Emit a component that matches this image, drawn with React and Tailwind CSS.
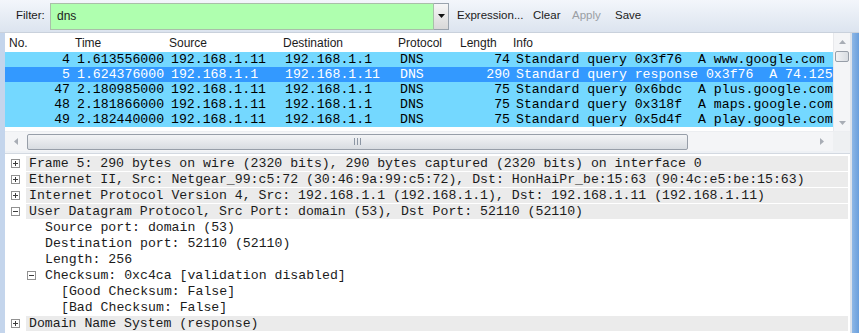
import React from 'react';

const packets = [
  { no: 4, time: '1.613556000', src: '192.168.1.11', dst: '192.168.1.1', proto: 'DNS', len: 74, info: 'Standard query 0x3f76  A www.google.com' },
  { no: 5, time: '1.624376000', src: '192.168.1.1', dst: '192.168.1.11', proto: 'DNS', len: 290, info: 'Standard query response 0x3f76  A 74.125.225.80', selected: true },
  { no: 47, time: '2.180985000', src: '192.168.1.11', dst: '192.168.1.1', proto: 'DNS', len: 75, info: 'Standard query 0x6bdc  A plus.google.com' },
  { no: 48, time: '2.181866000', src: '192.168.1.11', dst: '192.168.1.1', proto: 'DNS', len: 75, info: 'Standard query 0x318f  A maps.google.com' },
  { no: 49, time: '2.182440000', src: '192.168.1.11', dst: '192.168.1.1', proto: 'DNS', len: 75, info: 'Standard query 0x5d4f  A play.google.com' },
];

const tree = [
  { level: 0, box: '+', text: 'Frame 5: 290 bytes on wire (2320 bits), 290 bytes captured (2320 bits) on interface 0' },
  { level: 0, box: '+', text: 'Ethernet II, Src: Netgear_99:c5:72 (30:46:9a:99:c5:72), Dst: HonHaiPr_be:15:63 (90:4c:e5:be:15:63)' },
  { level: 0, box: '+', text: 'Internet Protocol Version 4, Src: 192.168.1.1 (192.168.1.1), Dst: 192.168.1.11 (192.168.1.11)' },
  { level: 0, box: '-', text: 'User Datagram Protocol, Src Port: domain (53), Dst Port: 52110 (52110)' },
  { level: 1, text: 'Source port: domain (53)' },
  { level: 1, text: 'Destination port: 52110 (52110)' },
  { level: 1, text: 'Length: 256' },
  { level: 1, box: '-', text: 'Checksum: 0xc4ca [validation disabled]' },
  { level: 2, text: '[Good Checksum: False]' },
  { level: 2, text: '[Bad Checksum: False]' },
  { level: 0, box: '+', text: 'Domain Name System (response)' },
];

const mono = { fontFamily: '"Liberation Mono", monospace' };

const Expander = ({ open }) => (
  <svg width="9" height="9" className="shrink-0">
    <rect x="0.5" y="0.5" width="8" height="8" fill="#fff" stroke="#919191" />
    <line x1="2" y1="4.5" x2="7" y2="4.5" stroke="#3c3c3c" />
    {!open && <line x1="4.5" y1="2" x2="4.5" y2="7" stroke="#3c3c3c" />}
  </svg>
);

const Arrow = ({ dir }) => {
  const pts = {
    up: '0,4 3.5,0 7,4',
    down: '0,0 3.5,4 7,0',
    left: '4,0 0,3.5 4,7',
    right: '0,0 4,3.5 0,7',
  }[dir];
  const vertical = dir === 'up' || dir === 'down';
  return (
    <svg width={vertical ? 7 : 4} height={vertical ? 4 : 7}>
      <polygon points={pts} fill="#a8adb5" />
    </svg>
  );
};

const Grip = ({ vertical }) => (
  <svg width={vertical ? 7 : 7} height={vertical ? 7 : 7}>
    {[0, 3, 6].map((o) =>
      vertical ? (
        <line key={o} x1="0" y1={o + 0.5} x2="7" y2={o + 0.5} stroke="#8c96a3" />
      ) : (
        <line key={o} x1={o + 0.5} y1="0" x2={o + 0.5} y2="7" stroke="#8c96a3" />
      )
    )}
  </svg>
);

export default function App() {
  return (
    <div
      className="w-[859px] h-[333px] overflow-hidden bg-white flex flex-col text-[#1b1b1b]"
      style={{ fontFamily: '"Liberation Sans", Arial, sans-serif' }}
    >
      {/* filter toolbar */}
      <div className="h-[33px] shrink-0 flex items-center bg-gradient-to-b from-[#f3f6fb] to-[#dce4ef] border-b border-[#c9d1dc] text-[11.5px]">
        <span className="w-[34px] ml-[16px] shrink-0">Filter:</span>
        <div className="w-[384px] h-[27px] bg-[#afffaf] border border-[#a9bfa9] flex items-center pl-[6px] text-[12px]">
          dns
        </div>
        <div className="w-[15px] h-[27px] border border-l-0 border-[#9aa3ad] bg-gradient-to-b from-[#f6f6f6] to-[#d8d8d8] flex items-center justify-center">
          <svg width="7" height="4">
            <polygon points="0,0 3.5,4 7,0" fill="#111" />
          </svg>
        </div>
        <span className="ml-[8px] w-[76px] shrink-0">Expression...</span>
        <span className="w-[39px] shrink-0">Clear</span>
        <span className="w-[43px] shrink-0 text-[#9a9ea4]">Apply</span>
        <span>Save</span>
      </div>

      <div className="flex flex-1 min-h-0">
        {/* window frame left */}
        <div className="w-[5px] shrink-0 bg-[#c4d5ec]" />

        <div className="w-[845px] shrink-0 flex flex-col">
          {/* packet list */}
          <div className="flex h-[98px] shrink-0">
            <div className="w-[828px] shrink-0 overflow-hidden">
              <div className="flex h-[19px] items-center text-[12px] whitespace-nowrap">
                <div className="w-[68px] pl-[4px]">No.</div>
                <div className="w-[94px] pl-[2px]">Time</div>
                <div className="w-[114px] pl-[2px]">Source</div>
                <div className="w-[115px] pl-[2px]">Destination</div>
                <div className="w-[62px] pl-[2px]">Protocol</div>
                <div className="w-[54px] pl-[2px]">Length</div>
                <div className="w-[321px] pl-[1px]">Info</div>
              </div>
              {packets.map((p) => (
                <div
                  key={p.no}
                  className={`flex h-[15px] items-center text-[13.2px] leading-[15px] whitespace-pre ${
                    p.selected ? 'bg-[#3399ff] text-white' : 'bg-[#74d8ff] text-black'
                  }`}
                  style={mono}
                >
                  <div className="w-[68px] shrink-0 text-right pr-[3px]">{p.no}</div>
                  <div className="w-[94px] shrink-0 pl-[4px]">{p.time}</div>
                  <div className="w-[114px] shrink-0 pl-[4px]">{p.src}</div>
                  <div className="w-[115px] shrink-0 pl-[4px]">{p.dst}</div>
                  <div className="w-[62px] shrink-0 pl-[4px]">{p.proto}</div>
                  <div className="w-[54px] shrink-0 text-right pr-[2px]">{p.len}</div>
                  <div className="w-[321px] shrink-0 pl-[4px] overflow-hidden">{p.info}</div>
                </div>
              ))}
            </div>
            {/* vertical scrollbar */}
            <div className="w-[17px] shrink-0 bg-[#f4f5f7] border-l border-[#e8e9ec] flex flex-col items-center">
              <div className="h-[18px] flex items-center justify-center">
                <Arrow dir="up" />
              </div>
              <div className="w-[14px] h-[11px] rounded-[2px] border border-[#979ea8] bg-gradient-to-r from-[#f2f3f5] to-[#d9dde2]" />
              <div className="flex-1" />
              <div className="h-[17px] flex items-center justify-center">
                <Arrow dir="down" />
              </div>
            </div>
          </div>

          {/* horizontal scrollbar */}
          <div className="flex h-[20px] shrink-0 border-t border-[#eceef1]">
            <div className="w-[828px] shrink-0 bg-[#f4f5f7] flex items-center">
              <div className="w-[22px] flex items-center justify-center">
                <Arrow dir="left" />
              </div>
              <div className="w-[661px] h-[16px] rounded-[2px] border border-[#979ea8] bg-gradient-to-b from-[#f3f4f6] to-[#d8dce1] flex items-center justify-center">
                <Grip />
              </div>
              <div className="flex-1" />
              <div className="w-[22px] flex items-center justify-center">
                <Arrow dir="right" />
              </div>
            </div>
            <div className="w-[17px] shrink-0 bg-[#eef0f2]" />
          </div>

          {/* splitter */}
          <div className="h-[3px] shrink-0 bg-[#eef1f5] border-b border-[#d3d9e1]" />

          {/* packet details */}
          <div className="flex-1 pt-[1px] overflow-hidden text-[13.2px]" style={mono}>
            {tree.map((n, i) => (
              <div
                key={i}
                className="flex items-center h-[16px] whitespace-pre"
                style={{ paddingLeft: 6 + n.level * 16 }}
              >
                {n.box ? <Expander open={n.box === '-'} /> : <div className="w-[9px] shrink-0" />}
                <div
                  className={`ml-[6px] pl-[3px] h-[15px] leading-[15px] ${
                    n.level === 0 ? 'flex-1 mr-[2px] bg-[#ebebeb]' : ''
                  }`}
                >
                  {n.text}
                </div>
              </div>
            ))}
          </div>
        </div>

        {/* window frame right */}
        <div className="w-[2px] shrink-0 bg-[#dde3eb]" />
        <div className="w-[7px] shrink-0 bg-gradient-to-r from-[#8db7e6] to-[#6a9fdc]" />
      </div>
    </div>
  );
}
